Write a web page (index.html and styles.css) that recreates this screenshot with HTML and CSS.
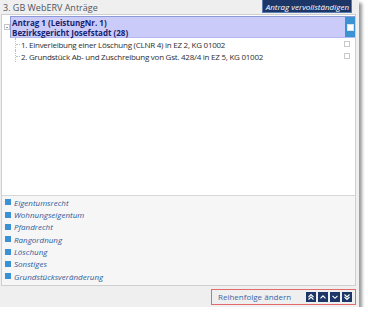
FILE: index.html
```html
<!DOCTYPE html>
<html>
<head>
<meta charset="utf-8">
<link rel="stylesheet" href="styles.css">
</head>
<body>
<div class="panel">
  <div class="header">
    <span class="title">3. GB WebERV Anträge</span>
    <span class="btn-complete">Antrag vervollständigen</span>
  </div>
  <div class="box">
    <div class="tree">
      <div class="node">
        <span class="toggle"></span>
        <div class="sel">
          <div class="sel-text">
            <div>Antrag 1 (LeistungNr. 1)</div>
            <div>Bezirksgericht Josefstadt (28)</div>
          </div>
          <div class="sel-check"><span class="cb cb-white"></span></div>
        </div>
      </div>
      <div class="item first">
        <span class="line"></span>
        <span class="label">1. Einverleibung einer Löschung (CLNR 4) in EZ 2, KG 01002</span>
        <span class="cb cb-small"></span>
      </div>
      <div class="item">
        <span class="line"></span>
        <span class="label">2. Grundstück Ab- und Zuschreibung von Gst. 428/4 in EZ 5, KG 01002</span>
        <span class="cb cb-small"></span>
      </div>
    </div>
    <ul class="cats">
      <li><span class="sq"></span>Eigentumsrecht</li>
      <li><span class="sq"></span>Wohnungseigentum</li>
      <li><span class="sq"></span>Pfandrecht</li>
      <li><span class="sq"></span>Rangordnung</li>
      <li><span class="sq"></span>Löschung</li>
      <li><span class="sq"></span>Sonstiges</li>
      <li><span class="sq"></span>Grundstücksveränderung</li>
    </ul>
  </div>
  <div class="footer">
    <div class="order">
      <span class="order-label">Reihenfolge ändern</span>
      <span class="nav">
        <span class="nb"><svg viewBox="0 0 10 10" width="10" height="10"><path d="M2.5 5 L5 2.5 L7.5 5 M2.5 7.5 L5 5 L7.5 7.5" fill="none" stroke="#fff" stroke-width="1.1"/></svg></span>
        <span class="nb"><svg viewBox="0 0 10 10" width="10" height="10"><path d="M2.5 6.3 L5 3.8 L7.5 6.3" fill="none" stroke="#fff" stroke-width="1.1"/></svg></span>
        <span class="nb"><svg viewBox="0 0 10 10" width="10" height="10"><path d="M2.5 3.8 L5 6.3 L7.5 3.8" fill="none" stroke="#fff" stroke-width="1.1"/></svg></span>
        <span class="nb"><svg viewBox="0 0 10 10" width="10" height="10"><path d="M2.5 2.5 L5 5 L7.5 2.5 M2.5 5 L5 7.5 L7.5 5" fill="none" stroke="#fff" stroke-width="1.1"/></svg></span>
      </span>
    </div>
  </div>
</div>
</body>
</html>
```

FILE: styles.css
```css
* { box-sizing: border-box; }
html, body { margin: 0; padding: 0; background: #fff; }
body { font-family: "Open Sans", "DejaVu Sans", sans-serif; }

.panel {
  width: 359px;
  height: 307px;
  background: #efefef;
  box-shadow: 3px 3px 3px #9a9a9a;
  display: flex;
  flex-direction: column;
}

.header {
  height: 14px;
  display: flex;
  align-items: flex-start;
  justify-content: space-between;
  padding-left: 3px;
  padding-right: 7px;
}
.title {
  font-size: 9px;
  line-height: 15px;
  color: #505560;
}
.btn-complete {
  background: #1b3667;
  color: #fff;
  font-style: italic;
  font-size: 8px;
  line-height: 13px;
  height: 13px;
  padding: 0 2px 0 3px;
  border: 1px solid #5b7bb0;
  border-top: none;
}

.box {
  margin-left: 1px;
  width: 355px;
  height: 272px;
  border: 1px solid #cfcfcf;
  background: #fff;
  display: flex;
  flex-direction: column;
}

.tree {
  flex: 1;
  background: #fff;
  padding-top: 1px;
}
.node {
  display: flex;
  align-items: center;
}
.toggle {
  width: 6px;
  height: 6px;
  border: 1px solid #c4c4c4;
  margin-left: 2px;
  margin-right: 0;
  position: relative;
}
.toggle::after {
  content: "";
  position: absolute;
  left: 1px;
  top: 2px;
  width: 2px;
  height: 1px;
  background: #999;
}
.sel {
  flex: 1;
  display: flex;
  height: 22px;
  background: #cbcbf9;
  border-top: 1px solid #8c9ad8;
  border-left: 1px solid #8c9ad8;
  border-bottom: 1px solid #b4b8ee;
}
.sel-text {
  flex: 1;
  padding-left: 1px;
  padding-top: 1px;
  font-size: 8px;
  line-height: 10px;
  font-weight: bold;
  color: #16236f;
}
.sel-check {
  width: 10px;
  background: #3b93d4;
  display: flex;
  align-items: center;
  justify-content: center;
}
.cb {
  display: block;
  width: 7px;
  height: 7px;
}
.cb-white {
  background: #fff;
  border: 1px solid #e0e0e0;
}
.item {
  display: flex;
  align-items: center;
  height: 12px;
  font-size: 8px;
  letter-spacing: -0.25px;
  color: #2e2e2e;
  padding-right: 5px;
}
.item.first { margin-top: 0; }
.line {
  width: 5px;
  height: 12px;
  margin-left: 13px;
  margin-right: 1px;
  border-left: 1px dotted #bdbdbd;
  position: relative;
}
.line::after {
  content: "";
  position: absolute;
  left: 0;
  top: 6px;
  width: 4px;
  border-top: 1px dotted #bdbdbd;
}
.label { flex: 1; white-space: nowrap; }
.cb-small {
  width: 6px;
  height: 6px;
  border: 1px solid #c9c9c9;
  background: #fff;
}

.cats {
  list-style: none;
  margin: 0;
  height: 90px;
  padding: 0 0 0 3px;
  background: #f6f6f6;
  border-top: 1px solid #d6d6d6;
}
.cats li {
  display: flex;
  align-items: center;
  height: 12.35px;
  font-size: 8px;
  font-style: italic;
  color: #2d5b9a;
}
.sq {
  width: 6px;
  height: 6px;
  background: #3a92d4;
  margin-right: 3px;
}

.footer {
  flex: 1;
  display: flex;
  justify-content: flex-end;
  align-items: center;
  padding-right: 3px;
}
.order {
  width: 145px;
  height: 16px;
  border: 1px solid #e36a6a;
  display: flex;
  align-items: center;
  justify-content: space-between;
  padding: 0 3px 0 6px;
}
.order-label {
  font-size: 8px;
  color: #3a67a8;
}
.nav {
  display: flex;
  gap: 2px;
}
.nb {
  display: block;
  width: 10px;
  height: 10px;
  background: #1b3667;
}
.nb svg { display: block; }
```
